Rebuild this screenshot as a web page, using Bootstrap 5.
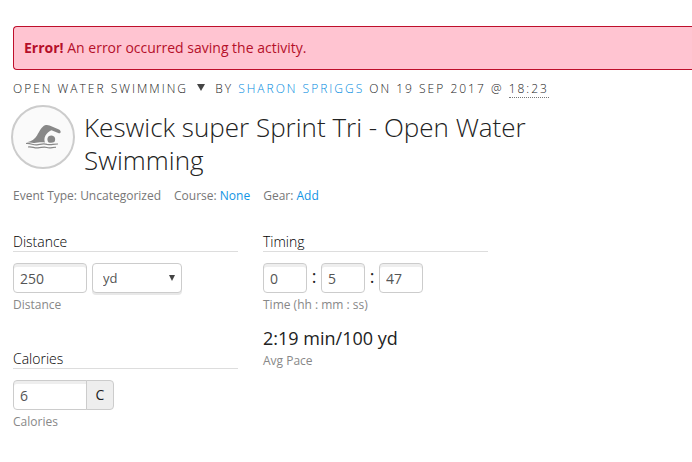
<!DOCTYPE html>
<html lang="en">
<head>
<meta charset="utf-8">
<meta name="viewport" content="width=device-width, initial-scale=1">
<title>Keswick super Sprint Tri - Open Water Swimming</title>
<link rel="stylesheet" href="https://cdn.jsdelivr.net/npm/bootstrap@5.3.0/dist/css/bootstrap.min.css">
<style>
body{font-family:"Open Sans",sans-serif;font-size:14px;line-height:20px;color:#222;background:#fff}
a{color:#1194e4;text-decoration:none}
.page{padding:26px 0 24px 13px}
.error-bar{padding:11px 10px;color:#b5102a;background:#ffc4d1;border:1px solid #be0f2b;border-right:0;border-radius:4px 0 0 4px}
.byline{margin-top:9px;font-size:12px;font-weight:300;letter-spacing:2px;text-transform:uppercase;color:#222}
.byline a{color:#008be0}
.type-btn{font:inherit;letter-spacing:inherit;text-transform:inherit;color:inherit}
.type-btn svg{margin:0 10px 4px 4px}
.time-edit{border-bottom:1px dotted #777;line-height:17px;display:inline-block}
.title-row{margin:6px 0 0 -2px;gap:9px;max-width:560px}
.sport{width:64px;height:64px}
.title{font-size:26px;line-height:33px;font-weight:300;margin:6px 0 0;color:#222}
.meta{margin-top:9px;font-size:12px;color:#777;gap:13px}
.stats{margin-top:26px;gap:25px}
.stat-col{flex:0 1 225px}
.heading{font-size:14px;font-weight:300;line-height:19px;color:#000;border-bottom:1px solid #ddd;margin:0 0 11px}
.field,.unit{height:30px;font-size:14px;color:#555;border:1px solid #ccc;border-radius:4px;padding:0 6px}
.field{background:#fff;box-shadow:inset 0 3px 0 #eee}
.field:focus,.unit:focus{border-color:#1194e4}
.wide{width:74px}
.short{width:44px}
.measure{gap:5px}
.unit{width:90px;font-size:13px;padding:1px 10px 0;background-size:6px 6px;background-position:right 6px center;background-image:url("data:image/svg+xml,%3Csvg xmlns='http://www.w3.org/2000/svg' viewBox='0 0 6 6'%3E%3Cpath fill='%23444' d='M0 0h6L3 6z'/%3E%3C/svg%3E");box-shadow:0 2px 0 #e8e8e8}
.colon{width:14px;font-size:18px;line-height:26px;text-align:center}
.hint{display:block;margin-top:2px;font-size:12px;line-height:20px;color:#888}
.addon{width:28px;height:30px;margin-left:-1px;border:1px solid #ccc;border-radius:0 4px 4px 0;background:#eee;line-height:28px;text-align:center}
.calories{margin-top:34px}
.pace{margin-top:13px;font-size:18px;line-height:21px}
</style>
</head>
<body>
<main class="page">
  <div class="error-bar" role="alert"><strong>Error!</strong> An error occurred saving the activity.</div>
  <div class="byline"><button type="button" class="type-btn border-0 bg-transparent p-0">Open Water Swimming <svg width="8" height="7" viewBox="0 0 8 7" aria-hidden="true"><path d="M0 0h8L4 7z" fill="#444"/></svg></button>by <a href="#">Sharon Spriggs</a> on 19 Sep 2017 @ <span class="time-edit">18:23</span></div>
  <div class="title-row d-flex align-items-start">
    <svg class="sport flex-shrink-0" viewBox="0 0 64 64" aria-hidden="true">
      <circle cx="32" cy="32" r="31" fill="#fafafa" stroke="#ccc" stroke-width="2"/>
      <path d="M16 37.300C21 36 24 34 26 30.500C28.500 26 31 21.500 34 20.300C35.500 19.700 37 19.900 38.500 20.500L48 24.600C49.600 25.500 50.100 27 49.300 27.900C48.800 28.500 48 28.400 47.200 28L40.500 25.200C37.500 26.200 34.500 29.500 33.700 32.500C33.200 34.500 33.400 36 34 37.600C29 36.300 26 38.500 21 37.700Z" fill="#888"/>
      <path d="M37.300 37.200C35.300 34 36.700 30.500 40.300 30.500C43.900 30.500 45.200 34.300 43.300 37Q40.300 38.300 37.300 37.200Z" fill="#888"/>
      <path d="M15 38.500C20 38 22 40.300 26 39.800C30 39.300 32 38.300 36 39.300C40 40.200 42 38.900 47 39M17 42C21 41.300 23 43.300 27 42.900C31 42.500 33 41.500 36 42.500C39 43.500 42 42 45 42.300" fill="none" stroke="#888" stroke-width="1.200"/>
    </svg>
    <h1 class="title">Keswick super Sprint Tri - Open Water Swimming</h1>
  </div>
  <div class="meta d-flex flex-wrap">
    <span>Event Type: Uncategorized</span><span>Course: <a href="#">None</a></span><span>Gear: <a href="#">Add</a></span>
  </div>
  <form class="stats d-flex flex-wrap align-items-start">
    <div class="stat-col">
      <section>
        <h2 class="heading">Distance</h2>
        <div class="measure d-flex">
          <input id="distance" class="form-control field wide" value="250">
          <select class="form-select unit" aria-label="Distance unit"><option>yd</option><option>m</option></select>
        </div>
        <label class="hint" for="distance">Distance</label>
      </section>
      <section class="calories">
        <h2 class="heading">Calories</h2>
        <div class="d-flex">
          <input id="calories" class="form-control field wide rounded-end-0" value="6">
          <span class="addon">C</span>
        </div>
        <label class="hint" for="calories">Calories</label>
      </section>
    </div>
    <section class="stat-col">
      <h2 class="heading">Timing</h2>
      <div class="d-flex">
        <input id="hours" class="form-control field short" value="0"><span class="colon">:</span>
        <input class="form-control field short" value="5" aria-label="Minutes"><span class="colon">:</span>
        <input class="form-control field short" value="47" aria-label="Seconds">
      </div>
      <label class="hint" for="hours">Time (hh : mm : ss)</label>
      <div class="pace">2:19 min/100 yd</div>
      <span class="hint">Avg Pace</span>
    </section>
  </form>
</main>
<script src="https://cdn.jsdelivr.net/npm/bootstrap@5.3.0/dist/js/bootstrap.bundle.min.js"></script>
</body>
</html>
